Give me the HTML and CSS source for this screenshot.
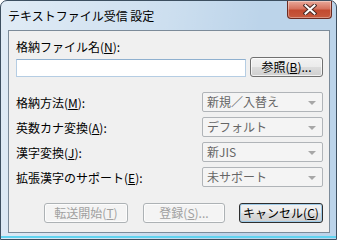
FILE: index.html
```html
<!DOCTYPE html>
<html lang="ja">
<head>
    <meta charset="UTF-8">
    <title>テキストファイル受信 設定</title>
    <link rel="stylesheet" href="styles.css">
</head>
<body>
    <div class="window">
        <div class="titlebar">
            <span class="title">テキストファイル受信 設定</span>
            <div class="close">
                <svg width="14" height="11" viewBox="0 0 14 11">
                    <path d="M2.5 1.5 L11.5 9.5 M11.5 1.5 L2.5 9.5" stroke="#4a2a26" stroke-width="4" stroke-linecap="square"/>
                    <path d="M2.5 1.5 L11.5 9.5 M11.5 1.5 L2.5 9.5" stroke="#ffffff" stroke-width="2" stroke-linecap="square"/>
                </svg>
            </div>
        </div>

        <div class="client">
            <div class="label">格納ファイル名(<u>N</u>):</div>
            <div class="file-row">
                <input type="text" class="file-input">
                <button class="btn browse">参照(<u>B</u>)...</button>
            </div>

            <div class="options">
                <div class="opt">
                    <span>格納方法(<u>M</u>):</span>
                    <div class="combo">新規／入替え<i class="arrow"></i></div>
                </div>
                <div class="opt">
                    <span>英数カナ変換(<u>A</u>):</span>
                    <div class="combo">デフォルト<i class="arrow"></i></div>
                </div>
                <div class="opt">
                    <span>漢字変換(<u>J</u>):</span>
                    <div class="combo">新JIS<i class="arrow"></i></div>
                </div>
                <div class="opt">
                    <span>拡張漢字のサポート(<u>E</u>):</span>
                    <div class="combo">未サポート<i class="arrow"></i></div>
                </div>
            </div>

            <div class="actions">
                <button class="btn disabled start">転送開始(<u>T</u>)</button>
                <button class="btn disabled save">登録(<u>S</u>)...</button>
                <button class="btn cancel">キャンセル(<u>C</u>)</button>
            </div>
        </div>
    </div>
</body>
</html>
```

FILE: styles.css
```css
* {
    box-sizing: border-box;
}

body {
    margin: 0;
    font-family: "Noto Sans CJK JP", "Liberation Sans", sans-serif;
    font-size: 12px;
    color: #000;
    background: #fff;
}

.window {
    width: 337px;
    height: 240px;
    border: 1px solid #3d4f60;
    border-radius: 7px 7px 0 0;
    padding: 0 6px 6px 7px;
    background:
        linear-gradient(to bottom, transparent 235px, #5fd3f0 235px, #5fd3f0 237px, transparent 237px),
        linear-gradient(100deg, rgba(255,255,255,0.55) 0, rgba(255,255,255,0.25) 45%, rgba(255,255,255,0) 70%),
        #bcd4ea;
    display: flex;
    flex-direction: column;
}

.titlebar {
    height: 29px;
    display: flex;
    align-items: flex-start;
}

.title {
    margin-top: 7px;
    line-height: 16px;
    font-size: 12px;
}

.close {
    margin-left: auto;
    margin-right: -2px;
    width: 45px;
    height: 18px;
    border: 1px solid #6b2b22;
    border-top: none;
    border-radius: 0 0 4px 4px;
    background: linear-gradient(to bottom, #e9a99a 0, #d6735f 45%, #c24a30 55%, #c75a3e 100%);
    box-shadow: inset 0 0 0 1px rgba(255,255,255,0.35);
    display: flex;
    align-items: center;
    justify-content: center;
}

.client {
    flex: 1;
    border: 1px solid #7c8b99;
    background-color: #f0f0f0;
    padding: 9px 6px 0 7px;
}

.label {
    line-height: 14px;
    height: 14px;
}

.file-row {
    margin-top: 3px;
    display: flex;
    align-items: flex-end;
    height: 20px;
}

.file-input {
    width: 230px;
    height: 18px;
    margin: 0;
    border: 1px solid #b5cde3;
    border-top-color: #8fb0cf;
    background-color: #fff;
    outline: none;
}

.btn {
    height: 20px;
    margin: 0;
    padding: 0;
    font-family: inherit;
    font-size: 12px;
    line-height: 16px;
    color: #000;
    border: 1px solid #707070;
    border-radius: 3px;
    background: linear-gradient(to bottom, #f2f2f2 0, #ebebeb 50%, #dddddd 50%, #cfcfcf 100%);
    box-shadow: inset 0 0 0 1px rgba(255,255,255,0.7);
}

.browse {
    margin-left: auto;
    width: 73px;
}

.options {
    margin-top: 15px;
    display: flex;
    flex-direction: column;
    gap: 5px;
}

.opt {
    height: 20px;
    display: flex;
    align-items: center;
}

.combo {
    position: relative;
    margin-left: auto;
    width: 121px;
    height: 20px;
    border: 1px solid #b0b4b8;
    border-radius: 2px;
    background-color: #f4f4f4;
    color: #666;
    padding-left: 4px;
    line-height: 18px;
}

.arrow {
    position: absolute;
    right: 6px;
    top: 8px;
    width: 0;
    height: 0;
    border-left: 4px solid transparent;
    border-right: 4px solid transparent;
    border-top: 4px solid #a7a7a7;
}

.actions {
    margin-top: 16px;
    display: flex;
    justify-content: flex-end;
    gap: 14px;
}

.disabled {
    color: #a0a0a0;
    border-color: #adb2b5;
    background: #f4f4f4;
}

.start {
    width: 84px;
    margin-right: 1px;
}

.save {
    width: 82px;
}

.cancel {
    width: 84px;
    border-color: #2e2e2e;
    box-shadow: inset 0 0 0 1px #9fcbe8;
}
```
